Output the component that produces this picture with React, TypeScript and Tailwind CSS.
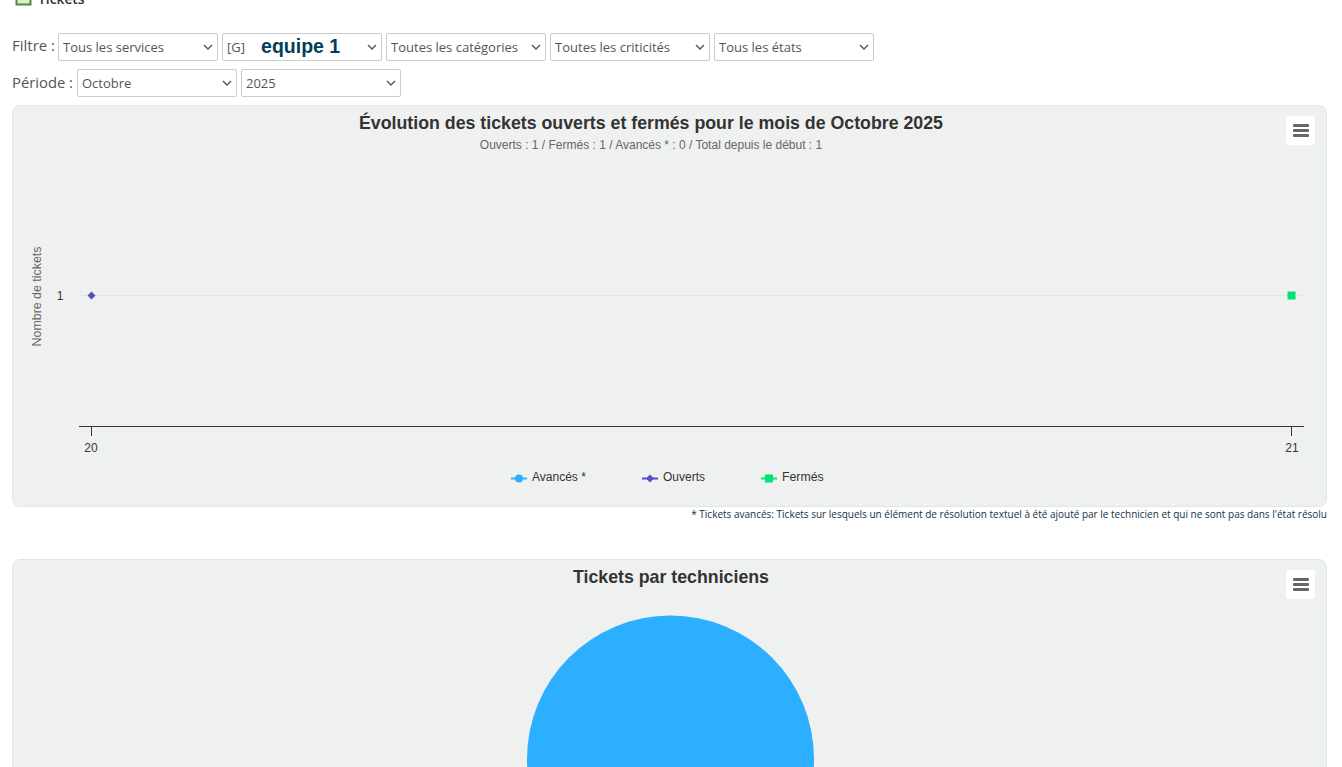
import React from "react";

const selectCls =
  "h-[28px] w-[160px] appearance-none rounded-[2px] border border-[#cccccc] bg-white pl-[4px] pt-[2px] text-[13px] text-[#555555] [font-family:'Open_Sans',sans-serif] outline-none";

function Select({ children }: { children: string }) {
  return (
    <div className="relative h-[28px] w-[160px]">
      <select className={selectCls}>
        <option>{children}</option>
      </select>
      <svg
        width="10"
        height="6"
        viewBox="0 0 10 6"
        className="pointer-events-none absolute right-[5px] top-[11px]"
      >
        <path d="M1 1l4 4 4-4" fill="none" stroke="#555555" strokeWidth="1.4" />
      </svg>
    </div>
  );
}

function MenuButton() {
  return (
    <div className="absolute right-[11px] top-[10px] flex h-[29px] w-[29px] flex-col items-center justify-center gap-[2px] rounded-[3px] bg-white">
      <span className="h-[3px] w-[16px] rounded-[1px] bg-[#666666]" />
      <span className="h-[3px] w-[16px] rounded-[1px] bg-[#666666]" />
      <span className="h-[3px] w-[16px] rounded-[1px] bg-[#666666]" />
    </div>
  );
}

function LineChart() {
  const axisFont = "'Liberation Sans',sans-serif";
  return (
    <svg width="1313" height="400" className="block" style={{ fontFamily: axisFont }}>
      <line x1="66" y1="189.5" x2="1290" y2="189.5" stroke="#e6e6e6" />
      <line x1="66" y1="320.5" x2="1291" y2="320.5" stroke="#333333" />
      <line x1="78.5" y1="321" x2="78.5" y2="330" stroke="#333333" />
      <line x1="1278.5" y1="321" x2="1278.5" y2="330" stroke="#333333" />
      <text x="47" y="194" fontSize="12" fill="#333333" textAnchor="middle">1</text>
      <text x="78" y="346" fontSize="12" fill="#333333" textAnchor="middle">20</text>
      <text x="1279" y="346" fontSize="12" fill="#333333" textAnchor="middle">21</text>
      <text
        transform="translate(28 190.5) rotate(-90)"
        fontSize="12.4"
        fill="#666666"
        textAnchor="middle"
      >
        Nombre de tickets
      </text>
      <polygon points="78.5,185.5 82.5,189.5 78.5,193.5 74.5,189.5" fill="#544fc5" />
      <rect x="1274.5" y="185.5" width="8" height="8" fill="#00e272" />

      <line x1="498" y1="372.5" x2="514" y2="372.5" stroke="#2caffe" strokeWidth="2" />
      <circle cx="506" cy="372.5" r="4" fill="#2caffe" />
      <text x="519" y="375" fontSize="12" fill="#333333">Avancés *</text>

      <line x1="629" y1="372.5" x2="645" y2="372.5" stroke="#544fc5" strokeWidth="2" />
      <polygon points="637,368.5 641,372.5 637,376.5 633,372.5" fill="#544fc5" />
      <text x="650" y="375" fontSize="12" fill="#333333">Ouverts</text>

      <line x1="748" y1="372.5" x2="764" y2="372.5" stroke="#00e272" strokeWidth="2" />
      <rect x="752" y="368.5" width="8" height="8" fill="#00e272" />
      <text x="769" y="375" fontSize="12.3" fill="#333333">Fermés</text>
    </svg>
  );
}

function PieChart() {
  return (
    <svg width="1313" height="200" className="block">
      <circle cx="657.5" cy="171" r="143.5" fill="#2caffe" />
    </svg>
  );
}

export default function App() {
  return (
    <div className="h-[767px] w-[1342px] overflow-hidden bg-white [font-family:'Open_Sans',sans-serif]">
      <div className="mt-[-11px] flex items-center gap-[5px] pl-[15px] text-[13.8px] font-semibold text-[#333333]">
        <svg width="18" height="18" viewBox="0 0 18 18">
          <rect x="1.5" y="4.5" width="14" height="10" fill="#dfe8d0" stroke="#4f8a2c" strokeWidth="2" />
          <rect x="4" y="2" width="9" height="8" fill="#b9c9a8" />
        </svg>
        <span>Tickets</span>
      </div>

      <div className="mt-[23px] flex h-[28px] items-center pl-[12px]">
        <span className="mr-[3px] pb-[2px] text-[15px] text-[#555555]">Filtre :</span>
        <div className="flex gap-[4px]">
          <Select>Tous les services</Select>
          <div className="relative">
            <Select>[G]</Select>
            <span className="absolute left-[39px] top-[1px] text-[19.5px] font-bold leading-[24px] text-[#033e5b] [font-family:'Liberation_Sans',sans-serif]">
              equipe 1
            </span>
          </div>
          <Select>Toutes les catégories</Select>
          <Select>Toutes les criticités</Select>
          <Select>Tous les états</Select>
        </div>
      </div>

      <div className="mt-[8px] flex h-[28px] items-center pl-[12px]">
        <span className="mr-[4px] pb-[2px] text-[14.8px] text-[#555555]">Période :</span>
        <div className="flex gap-[4px]">
          <Select>Octobre</Select>
          <Select>2025</Select>
        </div>
      </div>

      <section className="relative ml-[12px] mt-[8px] h-[402px] w-[1315px] rounded-[8px] border border-[#dbe8f2] bg-[#eff1f1] [font-family:'Liberation_Sans',sans-serif]">
        <MenuButton />
        <div className="absolute inset-x-0 top-[6px] pr-[37px] text-center">
          <h2 className="text-[17.75px] font-bold leading-[22px] text-[#333333]">
            Évolution des tickets ouverts et fermés pour le mois de Octobre 2025
          </h2>
          <p className="mt-[3px] text-[12px] leading-[16px] text-[#666666]">
            Ouverts : 1 / Fermés : 1 / Avancés * : 0 / Total depuis le début : 1
          </p>
        </div>
        <LineChart />
      </section>

      <p className="mr-[15px] whitespace-nowrap text-right text-[10px] leading-[14px] text-[#14304a]">
        * Tickets avancés: Tickets sur lesquels un élément de résolution textuel à été ajouté par le technicien et qui ne sont pas dans l'état résolu
      </p>

      <section className="relative ml-[12px] mt-[38px] h-[260px] w-[1315px] rounded-[8px] border border-[#dbe8f2] bg-[#eff1f1] [font-family:'Liberation_Sans',sans-serif]">
        <MenuButton />
        <h2 className="pl-[3px] pt-[6px] text-center text-[17.75px] font-bold leading-[22px] text-[#333333]">
          Tickets par techniciens
        </h2>
        <PieChart />
      </section>
    </div>
  );
}
